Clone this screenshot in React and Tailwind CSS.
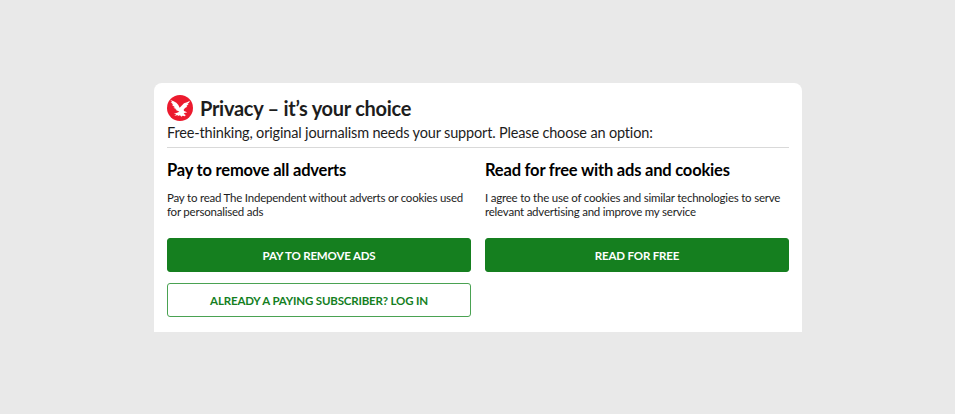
const EagleLogo = () => (
  <svg className="size-[26px] shrink-0" viewBox="0 0 78 78" aria-hidden="true">
    <circle cx="39" cy="39" r="39" fill="#ec1a2e" />
    <path
      fill="#fff"
      d="M10 15 L20 19 L28 23 L34 30 L38 38 L43 33 L51 25 L60 22 L69 17 L66 23 L61 27 L65 28 L58 33 L61 35 L54 39 L50 44 L51 48 L57 50 L60 53 L54 53 L50 56 L56 60 L54 64 L47 62 L43 65 L39 61 L31 64 L34 60 L22 62 L28 57 L20 56 L30 53 L37 50 L33 48 L25 44 L29 43 L19 38 L24 37 L14 29 L19 29 L11 21 L16 22 Z"
    />
  </svg>
)

const buttonBase =
  'flex h-[34px] w-full items-center justify-center rounded-[3px] border pt-0.5 text-[11.5px] font-bold tracking-[-0.17px]'

const Option = ({ title, children }) => (
  <section className="w-[304px]">
    <h2 className="text-[16.5px] leading-5 font-bold tracking-[-0.2px] whitespace-nowrap text-black">{title}</h2>
    {children}
  </section>
)

const App = () => {
  return (
    <div className="flex h-[414px] justify-center bg-[#e9e9e9] pt-[83px] pl-px font-['Lato',sans-serif] text-[#1d1d1d]">
      <main className="h-[249px] w-[648px] rounded-t-[8px] bg-white px-[13px] pt-3">
        <header className="border-b border-[#d9d9d9]">
          <div className="flex h-[26px] items-center gap-[7px]">
            <EagleLogo />
            <h1 className="text-[20px] leading-6 font-bold tracking-[-0.28px] whitespace-nowrap">
              Privacy – it’s your choice
            </h1>
          </div>
          <p className="h-[26px] pt-px text-[14.5px] leading-[22px] tracking-[-0.165px] whitespace-nowrap">
            Free-thinking, original journalism needs your support. Please choose an option:
          </p>
        </header>

        <div className="flex gap-[14px] pt-3">
          <Option title="Pay to remove all adverts">
            <p className="mt-[11px] text-[11.5px] leading-[14px] tracking-[-0.22px] whitespace-nowrap">
              Pay to read The Independent without adverts or cookies used
              <br />
              for personalised ads
            </p>
            <button className={`${buttonBase} mt-[19px] border-[#157f1f] bg-[#157f1f] text-white`}>
              PAY TO REMOVE ADS
            </button>
            <button className={`${buttonBase} mt-[11px] border-[#4aa252] bg-white text-[#157f1f]`}>
              ALREADY A PAYING SUBSCRIBER? LOG IN
            </button>
          </Option>

          <Option title="Read for free with ads and cookies">
            <p className="mt-[11px] text-[11.5px] leading-[14px] tracking-[-0.22px] whitespace-nowrap">
              I agree to the use of cookies and similar technologies to serve
              <br />
              relevant advertising and improve my service
            </p>
            <button className={`${buttonBase} mt-[19px] border-[#157f1f] bg-[#157f1f] text-white`}>
              READ FOR FREE
            </button>
          </Option>
        </div>
      </main>
    </div>
  )
}

export default App
